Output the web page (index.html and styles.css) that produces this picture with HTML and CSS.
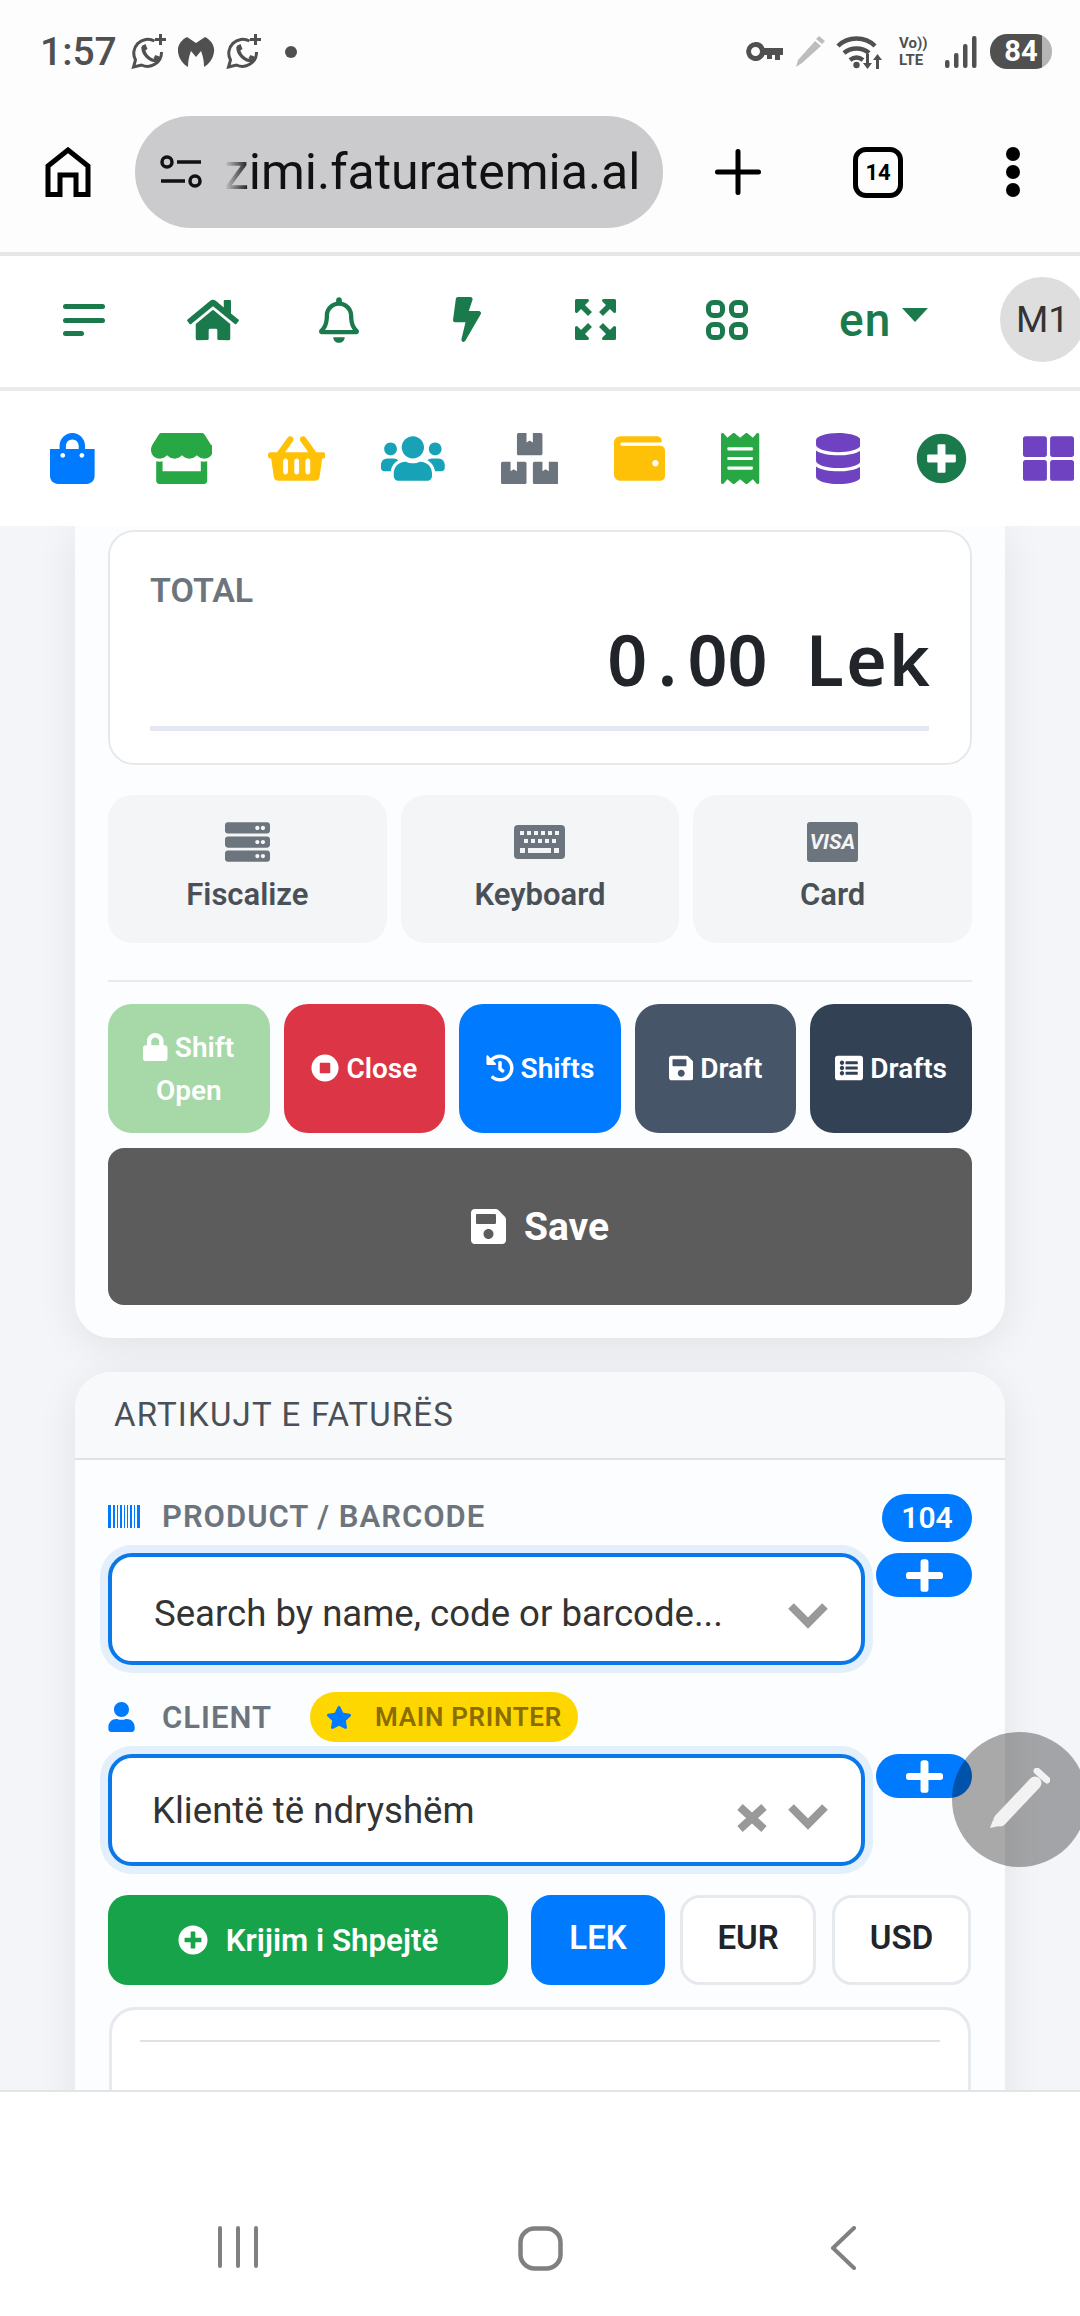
FILE: index.html
```html
<!DOCTYPE html>
<html lang="en">
<head>
    <meta charset="UTF-8">
    <meta name="viewport" content="width=device-width, initial-scale=1.0">
    <title>Faturatemia</title>
    <link rel="stylesheet" href="styles.css">
</head>

<body>
    <svg class="defs" width="0" height="0">
        <defs>
            <path id="i-save" d="M433.941 129.941l-83.882-83.882A48 48 0 0 0 316.118 32H48C21.49 32 0 53.49 0 80v352c0 26.51 21.49 48 48 48h352c26.51 0 48-21.49 48-48V163.882a48 48 0 0 0-14.059-33.941zM224 416c-35.346 0-64-28.654-64-64 0-35.346 28.654-64 64-64s64 28.654 64 64c0 35.346-28.654 64-64 64zm96-304.52V212c0 6.627-5.373 12-12 12H76c-6.627 0-12-5.373-12-12V108c0-6.627 5.373-12 12-12h228.52c3.183 0 6.235 1.264 8.485 3.515l3.48 3.48A11.996 11.996 0 0 1 320 111.48z"/>
            <path id="i-plus" d="M416 208H272V64c0-17.67-14.33-32-32-32h-32c-17.67 0-32 14.33-32 32v144H32c-17.67 0-32 14.33-32 32v32c0 17.67 14.33 32 32 32h144v144c0 17.67 14.33 32 32 32h32c17.67 0 32-14.33 32-32V304h144c17.67 0 32-14.33 32-32v-32c0-17.67-14.33-32-32-32z"/>
            <path id="i-plus-circle" d="M256 8C119 8 8 119 8 256s111 248 248 248 248-111 248-248S393 8 256 8zm144 276c0 6.6-5.4 12-12 12h-92v92c0 6.6-5.4 12-12 12h-56c-6.6 0-12-5.4-12-12v-92h-92c-6.6 0-12-5.4-12-12v-56c0-6.6 5.4-12 12-12h92v-92c0-6.6 5.4-12 12-12h56c6.6 0 12 5.4 12 12v92h92c6.6 0 12 5.4 12 12v56z"/>
            <g id="i-whatsapp">
                <path fill="none" stroke="currentColor" stroke-width="3" d="M23 7A14 14 0 0 0 4 26L2 33l8-2A14 14 0 0 0 30 18"/>
                <path fill="none" stroke="currentColor" stroke-width="3.500" d="M11.500 13c0 7 6 14 15 14"/>
                <path d="M10 12l4-2 2 5-3 2zM22 24l2-3 5 2-2 5z"/>
                <path d="M27.500 0h3v4h4v3h-4v4h-3V7h-4V4h4z"/>
            </g>
            <g id="i-corner">
                <path d="M1.500 1.500h11l-11 11z" stroke="#1a7a4c" stroke-width="3" stroke-linejoin="round"/>
                <path d="M4 4l11 11" fill="none" stroke="#1a7a4c" stroke-width="5.500"/>
            </g>
        </defs>
    </svg>

    <header class="status-bar">
        <span class="clock">1:57</span>
        <svg class="st-app" viewBox="0 0 35 35"><use href="#i-whatsapp"/></svg>
        <svg class="st-malware" viewBox="0 0 37 30"><path d="M9 0l9 6 9-6c6 3 10 9 9 15-1 7-5 12-10 15 0-6-1-11-3-16l-5 6-5-6c-2 5-3 10-3 16C5 27 1 22 0 15-1 9 3 3 9 0z"/></svg>
        <svg class="st-app" viewBox="0 0 35 35"><use href="#i-whatsapp"/></svg>
        <span class="st-dot"></span>
        <span class="spacer"></span>
        <svg class="st-key" viewBox="0 0 37 19"><path fill-rule="evenodd" d="M9.500 0a9.500 9.500 0 0 1 9 6H37v7h-3v5h-5v-5h-3v4h-5v-4h-2.500a9.500 9.500 0 1 1-9-13zm0 5a4.500 4.500 0 1 0 0 9 4.500 4.500 0 0 0 0-9z"/></svg>
        <svg class="st-pen" viewBox="0 0 31 31"><path d="M24 0l6 5-3 3-6-5zM20 5l6 5L7 27l-6 4 2-7z"/></svg>
        <svg class="st-wifi" viewBox="0 0 48 34"><path fill="none" stroke="currentColor" stroke-width="4.500" d="M2 11C12 1 29 1 39 11M8 18c7-6 18-6 25 0M14 25c4-3 9-3 13 0"/><circle cx="20.500" cy="30" r="3.200"/><path d="M30 19h3v9h3l-4.500 6-4.500-6h3zM43 34h-3v-9h-3l4.500-6 4.500 6h-3z"/></svg>
        <span class="st-volte">Vo))<br>LTE</span>
        <svg class="st-signal" viewBox="0 0 32 32"><rect x="0" y="24" width="4.500" height="8" rx="2"/><rect x="9" y="17" width="4.500" height="15" rx="2"/><rect x="18" y="8" width="4.500" height="24" rx="2"/><rect x="27" y="0" width="4.500" height="32" rx="2"/></svg>
        <span class="st-battery">84</span>
    </header>

    <div class="browser-bar">
        <svg class="br-home" viewBox="0 0 46 50"><path fill="none" stroke="#000" stroke-width="5" stroke-linejoin="miter" d="M3 47.500V19L23 3l20 16v28.500H31V28H15v19.500z"/></svg>
        <div class="url-pill">
            <svg class="br-tune" viewBox="0 0 42 34"><g fill="none" stroke="#111" stroke-width="3.500"><circle cx="7" cy="7" r="5"/><path d="M17 7h24M1 26h24"/><circle cx="35" cy="26" r="5"/></g></svg>
            <span class="url-text">zimi.faturatemia.al</span>
        </div>
        <svg class="br-plus" viewBox="0 0 46 46"><path fill="none" stroke="#000" stroke-width="5" stroke-linecap="round" d="M23 2.500v41M2.500 23h41"/></svg>
        <div class="br-tabs">14</div>
        <div class="br-menu"><span></span><span></span><span></span></div>
    </div>

    <nav class="top-nav">
        <a class="nav-cell"><svg width="42" height="32" viewBox="0 0 42 32"><rect width="42" height="5" y="0" rx="2.500"/><rect width="42" height="5" y="14" rx="2.500"/><rect width="21" height="5" y="27" rx="2.500"/></svg></a>
        <a class="nav-cell"><svg width="52" height="46" viewBox="0 0 576 512"><path d="M280.37 148.26L96 300.11V464a16 16 0 0 0 16 16l112.06-.29a16 16 0 0 0 15.92-16V368a16 16 0 0 1 16-16h64a16 16 0 0 1 16 16v95.64a16 16 0 0 0 16 16.05L464 480a16 16 0 0 0 16-16V300L295.67 148.26a12.19 12.19 0 0 0-15.3 0zM571.6 251.47L488 182.56V44.05a12 12 0 0 0-12-12h-56a12 12 0 0 0-12 12v72.61L318.47 43a48 48 0 0 0-61 0L4.34 251.47a12 12 0 0 0-1.6 16.9l25.5 31A12 12 0 0 0 45.15 301l235.22-193.74a12.19 12.19 0 0 1 15.3 0L530.9 301a12 12 0 0 0 16.9-1.6l25.5-31a12 12 0 0 0-1.7-16.93z"/></svg></a>
        <a class="nav-cell nudge"><svg width="40" height="46" viewBox="0 0 448 512"><path d="M439.39 362.29c-19.32-20.76-55.47-51.99-55.47-154.29 0-77.7-54.48-139.9-127.94-155.16V32c0-17.67-14.32-32-31.98-32s-31.98 14.33-31.98 32v20.84C118.56 68.1 64.08 130.3 64.08 208c0 102.3-36.15 133.53-55.47 154.29-6 6.45-8.66 14.16-8.61 21.71.11 16.4 12.98 32 32.1 32h383.8c19.12 0 32-15.6 32.1-32 .05-7.55-2.61-15.27-8.61-21.71zM67.53 368c21.22-27.97 44.42-74.33 44.53-159.42 0-.2-.06-.38-.06-.58 0-61.86 50.14-112 112-112s112 50.14 112 112c0 .2-.06.38-.06.58.11 85.1 23.31 131.46 44.53 159.42H67.53zM224 512c35.32 0 63.97-28.65 63.97-64H160.03c0 35.35 28.65 64 63.97 64z"/></svg></a>
        <a class="nav-cell nudge"><svg width="28" height="45" viewBox="0 0 320 512"><path d="M296 160H180.6l42.6-129.8C227.2 15 215.7 0 200 0H56C44 0 33.8 8.9 32.2 20.8l-32 240C-2.7 275.2 8.5 288 24 288h118.7L96.6 482.500c-3.6 15.2 8 29.5 23.3 29.5 8.4 0 16.4-4.4 20.8-12l176-304c9.300-15.9-2.2-36-20.7-36z"/></svg></a>
        <a class="nav-cell nudge"><svg width="41" height="41" viewBox="0 0 41 41"><use href="#i-corner"/><use href="#i-corner" transform="rotate(90 20.500 20.500)"/><use href="#i-corner" transform="rotate(180 20.500 20.500)"/><use href="#i-corner" transform="rotate(270 20.500 20.500)"/></svg></a>
        <a class="nav-cell"><svg width="42" height="40" viewBox="0 0 42 40" fill="none" stroke="#1a7a4c" stroke-width="5"><rect x="2.500" y="2.500" width="14" height="13" rx="5"/><rect x="25.500" y="2.500" width="14" height="13" rx="5"/><rect x="2.500" y="24.500" width="14" height="13" rx="5"/><rect x="25.500" y="24.500" width="14" height="13" rx="5"/></svg></a>
        <a class="lang">en<span class="caret"></span></a>
        <div class="avatar">M1</div>
    </nav>

    <div class="app-icons">
        <svg viewBox="0 0 448 512" fill="#007bff"><path d="M352 160v-32C352 57.42 294.579 0 224 0 153.42 0 96 57.42 96 128v32H0v272c0 44.183 35.817 80 80 80h288c44.183 0 80-35.817 80-80V160h-96zm-192-32c0-35.29 28.71-64 64-64s64 28.71 64 64v32H160v-32zm160 120c-13.255 0-24-10.745-24-24 0-13.255 10.745-24 24-24s24 10.745 24 24c0 13.255-10.745 24-24 24zm-192 0c-13.255 0-24-10.745-24-24 0-13.255 10.745-24 24-24s24 10.745 24 24c0 13.255-10.745 24-24 24z"/></svg>
        <svg viewBox="0 0 616 512" fill="#28a745"><path d="M602 118.6L537.1 15C531.3 5.7 521 0 510 0H106C95 0 84.7 5.7 78.9 15L14 118.6c-33.9 54.1-3.9 129.3 59.4 137.9 4.6.6 9.2.9 13.7.9 29.9 0 56.4-13.1 74.6-33.4 18.2 20.3 44.8 33.4 74.6 33.4 29.9 0 56.4-13.1 74.6-33.4 18.2 20.3 44.8 33.4 74.6 33.4 29.9 0 56.4-13.1 74.6-33.4 18.3 20.3 44.8 33.4 74.6 33.4 4.6 0 9.1-.3 13.7-.9 63.5-8.5 93.6-83.7 59.6-137.9zM529.5 288c-10 0-19.9-1.5-29.5-3.8V384H116v-99.8c-9.6 2.2-19.5 3.8-29.5 3.8-6 0-12.1-.4-18-1.2-5.6-.8-11.1-2.1-16.4-3.6V480c0 17.7 14.3 32 32 32h448c17.7 0 32-14.3 32-32V283.200c-5.4 1.6-10.8 2.9-16.4 3.6-6.1.8-12.1 1.2-18.2 1.2z"/></svg>
        <svg viewBox="0 0 576 512" fill="#ffc107"><path d="M576 216v16c0 13.255-10.745 24-24 24h-8l-26.113 182.788C514.509 462.435 494.257 480 470.37 480H105.63c-23.887 0-44.139-17.565-47.518-41.212L32 256h-8c-13.255 0-24-10.745-24-24v-16c0-13.255 10.745-24 24-24h67.341l106.78-146.821c10.395-14.292 30.407-17.453 44.701-7.058 14.293 10.395 17.453 30.408 7.058 44.701L170.477 192h235.046L326.12 82.821c-10.395-14.292-7.234-34.306 7.059-44.701 14.291-10.395 34.306-7.235 44.701 7.058L484.659 192H552c13.255 0 24 10.745 24 24zM312 392V280c0-13.255-10.745-24-24-24s-24 10.745-24 24v112c0 13.255 10.745 24 24 24s24-10.745 24-24zm112 0V280c0-13.255-10.745-24-24-24s-24 10.745-24 24v112c0 13.255 10.745 24 24 24s24-10.745 24-24zm-224 0V280c0-13.255-10.745-24-24-24s-24 10.745-24 24v112c0 13.255 10.745 24 24 24s24-10.745 24-24z"/></svg>
        <svg viewBox="0 0 640 512" fill="#17a2b8"><path d="M96 224c35.3 0 64-28.7 64-64s-28.7-64-64-64-64 28.7-64 64 28.7 64 64 64zm448 0c35.3 0 64-28.7 64-64s-28.7-64-64-64-64 28.7-64 64 28.7 64 64 64zm32 32h-64c-17.6 0-33.500 7.100-45.100 18.600 40.300 22.100 68.900 62 75.100 109.400h66c17.700 0 32-14.300 32-32v-32c0-35.300-28.700-64-64-64zm-256 0c61.900 0 112-50.100 112-112S381.900 32 320 32 208 82.100 208 144s50.100 112 112 112zm76.800 32h-8.300c-20.800 10-43.900 16-68.500 16s-47.600-6-68.500-16h-8.300C179.600 288 128 339.600 128 403.200V432c0 26.500 21.500 48 48 48h288c26.500 0 48-21.500 48-48v-28.800c0-63.600-51.600-115.200-115.200-115.200zm-223.700-13.400C161.500 263.100 145.600 256 128 256H64c-35.300 0-64 28.700-64 64v32c0 17.700 14.300 32 32 32h65.900c6.300-47.400 34.900-87.300 75.200-109.400z"/></svg>
        <svg viewBox="0 0 576 512" fill="#6c757d"><path d="M560 288h-80v96l-32-21.300-32 21.300v-96h-80c-8.800 0-16 7.200-16 16v192c0 8.800 7.200 16 16 16h224c8.800 0 16-7.200 16-16V304c0-8.800-7.200-16-16-16zm-384-64h224c8.800 0 16-7.200 16-16V16c0-8.800-7.200-16-16-16h-80v96l-32-21.300L256 96V0h-80c-8.800 0-16 7.200-16 16v192c0 8.800 7.200 16 16 16zm64 64h-80v96l-32-21.300L96 384v-96H16c-8.800 0-16 7.200-16 16v192c0 8.800 7.200 16 16 16h224c8.800 0 16-7.200 16-16V304c0-8.800-7.200-16-16-16z"/></svg>
        <svg viewBox="0 0 512 512" fill="#ffc107"><path d="M461.200 128H80c-8.840 0-16-7.160-16-16s7.160-16 16-16h384c8.840 0 16-7.160 16-16 0-26.510-21.490-48-48-48H64C28.650 32 0 60.650 0 96v320c0 35.350 28.650 64 64 64h397.200c28.020 0 50.800-21.530 50.800-48V176c0-26.470-22.780-48-50.800-48zM416 336c-17.670 0-32-14.330-32-32s14.330-32 32-32 32 14.330 32 32-14.330 32-32 32z"/></svg>
        <svg viewBox="0 0 384 512" fill="#28a745"><path d="M358.400 3.200L320 48 265.600 3.200a15.900 15.900 0 0 0-19.200 0L192 48 137.600 3.200a15.900 15.900 0 0 0-19.200 0L64 48 25.600 3.200C15-4.700 0 2.800 0 16v480c0 13.200 15 20.700 25.600 12.800L64 464l54.400 44.800a15.900 15.900 0 0 0 19.200 0L192 464l54.400 44.800a15.900 15.900 0 0 0 19.200 0L320 464l38.400 44.800c10.500 7.900 25.600.4 25.600-12.800V16c0-13.200-15-20.700-25.600-12.800zM320 360c0 4.400-3.600 8-8 8H72c-4.400 0-8-3.600-8-8v-16c0-4.400 3.600-8 8-8h240c4.400 0 8 3.600 8 8v16zm0-96c0 4.400-3.600 8-8 8H72c-4.400 0-8-3.600-8-8v-16c0-4.400 3.600-8 8-8h240c4.400 0 8 3.600 8 8v16zm0-96c0 4.400-3.600 8-8 8H72c-4.400 0-8-3.600-8-8v-16c0-4.400 3.600-8 8-8h240c4.400 0 8 3.600 8 8v16z"/></svg>
        <svg viewBox="0 0 448 512" fill="#6f42c1"><path d="M448 73.143v45.714C448 159.143 347.667 192 224 192S0 159.143 0 118.857V73.143C0 32.857 100.333 0 224 0s224 32.857 224 73.143zM448 176v102.857C448 319.143 347.667 352 224 352S0 319.143 0 278.857V176c48.125 33.143 136.208 48.572 224 48.572S399.874 209.143 448 176zm0 160v102.857C448 479.143 347.667 512 224 512S0 479.143 0 438.857V336c48.125 33.143 136.208 48.572 224 48.572S399.874 369.143 448 336z"/></svg>
        <svg viewBox="0 0 512 512" fill="#1a7a4c"><use href="#i-plus-circle"/></svg>
        <svg viewBox="0 0 512 512" fill="#6f42c1"><path d="M296 32h192c13.255 0 24 10.745 24 24v160c0 13.255-10.745 24-24 24H296c-13.255 0-24-10.745-24-24V56c0-13.255 10.745-24 24-24zm-80 0H24C10.745 32 0 42.745 0 56v160c0 13.255 10.745 24 24 24h192c13.255 0 24-10.745 24-24V56c0-13.255-10.745-24-24-24zM0 296v160c0 13.255 10.745 24 24 24h192c13.255 0 24-10.745 24-24V296c0-13.255-10.745-24-24-24H24c-13.255 0-24 10.745-24 24zm296 184h192c13.255 0 24-10.745 24-24V296c0-13.255-10.745-24-24-24H296c-13.255 0-24 10.745-24 24v160c0 13.255 10.745 24 24 24z"/></svg>
    </div>

    <main class="content">
        <section class="card card-total">
            <div class="total-box">
                <div class="total-label">TOTAL</div>
                <div class="total-value">0<span class="total-dot">.</span>00 <span class="total-unit">Lek</span></div>
                <div class="total-line"></div>
            </div>

            <div class="pay-grid">
                <button class="pay-btn">
                    <svg width="45" height="40" viewBox="0 0 512 448"><path transform="translate(0 -32)" d="M480 160H32c-17.673 0-32-14.327-32-32V64c0-17.673 14.327-32 32-32h448c17.673 0 32 14.327 32 32v64c0 17.673-14.327 32-32 32zm-48-88c-13.255 0-24 10.745-24 24s10.745 24 24 24 24-10.745 24-24-10.745-24-24-24zm-64 0c-13.255 0-24 10.745-24 24s10.745 24 24 24 24-10.745 24-24-10.745-24-24-24zm112 248H32c-17.673 0-32-14.327-32-32v-64c0-17.673 14.327-32 32-32h448c17.673 0 32 14.327 32 32v64c0 17.673-14.327 32-32 32zm-48-88c-13.255 0-24 10.745-24 24s10.745 24 24 24 24-10.745 24-24-10.745-24-24-24zm-64 0c-13.255 0-24 10.745-24 24s10.745 24 24 24 24-10.745 24-24-10.745-24-24-24zm112 248H32c-17.673 0-32-14.327-32-32v-64c0-17.673 14.327-32 32-32h448c17.673 0 32 14.327 32 32v64c0 17.673-14.327 32-32 32zm-48-88c-13.255 0-24 10.745-24 24s10.745 24 24 24 24-10.745 24-24-10.745-24-24-24zm-64 0c-13.255 0-24 10.745-24 24s10.745 24 24 24 24-10.745 24-24-10.745-24-24-24z"/></svg>
                    Fiscalize
                </button>
                <button class="pay-btn">
                    <svg width="51" height="40" viewBox="0 -3 51 40"><rect width="51" height="34" rx="4"/><g fill="#f3f5f6"><rect x="6" y="6" width="4" height="4"/><rect x="13" y="6" width="4" height="4"/><rect x="20" y="6" width="4" height="4"/><rect x="27" y="6" width="4" height="4"/><rect x="34" y="6" width="4" height="4"/><rect x="41" y="6" width="4" height="4"/><rect x="10" y="14" width="4" height="4"/><rect x="17" y="14" width="4" height="4"/><rect x="24" y="14" width="4" height="4"/><rect x="31" y="14" width="4" height="4"/><rect x="38" y="14" width="4" height="4"/><rect x="6" y="23" width="5" height="5"/><rect x="14" y="23" width="23" height="5"/><rect x="40" y="23" width="5" height="5"/></g></svg>
                    Keyboard
                </button>
                <button class="pay-btn">
                    <svg width="51" height="40" viewBox="0 0 51 40"><rect width="51" height="40" rx="3"/><text class="visa-text" x="25.500" y="27" text-anchor="middle">VISA</text></svg>
                    Card
                </button>
            </div>

            <div class="divider"></div>

            <div class="shift-row">
                <button class="shift-btn btn-open">
                    <span><svg class="ic" viewBox="0 0 448 512"><path d="M400 224h-24v-72C376 68.200 307.800 0 224 0S72 68.200 72 152v72H48c-26.500 0-48 21.500-48 48v192c0 26.500 21.500 48 48 48h352c26.500 0 48-21.500 48-48V272c0-26.500-21.500-48-48-48zm-104 0H152v-72c0-39.700 32.300-72 72-72s72 32.300 72 72v72z"/></svg> Shift Open</span>
                </button>
                <button class="shift-btn btn-close">
                    <span><svg class="ic" viewBox="0 0 512 512"><path d="M256 8C119 8 8 119 8 256s111 248 248 248 248-111 248-248S393 8 256 8zm96 328c0 8.800-7.200 16-16 16H176c-8.800 0-16-7.200-16-16V176c0-8.800 7.200-16 16-16h160c8.800 0 16 7.200 16 16v160z"/></svg> Close</span>
                </button>
                <button class="shift-btn btn-shifts">
                    <span><svg class="ic" viewBox="0 0 512 512"><path d="M504 255.531c.253 136.640-111.180 248.372-247.820 248.468-59.015.042-113.223-20.530-155.822-54.911-11.077-8.940-11.905-25.541-1.839-35.607l11.267-11.267c8.609-8.609 22.353-9.551 31.891-1.984C173.062 425.135 212.781 440 256 440c101.705 0 184-82.311 184-184 0-101.705-82.311-184-184-184-48.814 0-93.149 18.969-126.068 49.932l50.754 50.754c10.080 10.080 2.941 27.314-11.313 27.314H24c-8.837 0-16-7.163-16-16V38.627c0-14.254 17.234-21.393 27.314-11.314l49.372 49.372C129.209 34.136 189.552 8 256 8c136.810 0 247.747 110.780 248 247.531zm-180.912 78.784l9.823-12.630c8.138-10.463 6.253-25.542-4.210-33.679L288 256.349V152c0-13.255-10.745-24-24-24h-16c-13.255 0-24 10.745-24 24v135.651l65.409 50.874c10.463 8.137 25.541 6.253 33.679-4.210z"/></svg> Shifts</span>
                </button>
                <button class="shift-btn btn-draft">
                    <span><svg class="ic" viewBox="0 0 448 512"><use href="#i-save"/></svg> Draft</span>
                </button>
                <button class="shift-btn btn-drafts">
                    <span><svg class="ic" viewBox="0 0 512 512"><path d="M464 480H48c-26.510 0-48-21.490-48-48V80c0-26.510 21.490-48 48-48h416c26.510 0 48 21.490 48 48v352c0 26.510-21.490 48-48 48zM128 120c-22.091 0-40 17.909-40 40s17.909 40 40 40 40-17.909 40-40-17.909-40-40-40zm0 96c-22.091 0-40 17.909-40 40s17.909 40 40 40 40-17.909 40-40-17.909-40-40-40zm0 96c-22.091 0-40 17.909-40 40s17.909 40 40 40 40-17.909 40-40-17.909-40-40-40zm288-136v-32c0-6.627-5.373-12-12-12H204c-6.627 0-12 5.373-12 12v32c0 6.627 5.373 12 12 12h200c6.627 0 12-5.373 12-12zm0 96v-32c0-6.627-5.373-12-12-12H204c-6.627 0-12 5.373-12 12v32c0 6.627 5.373 12 12 12h200c6.627 0 12-5.373 12-12zm0 96v-32c0-6.627-5.373-12-12-12H204c-6.627 0-12 5.373-12 12v32c0 6.627 5.373 12 12 12h200c6.627 0 12-5.373 12-12z"/></svg> Drafts</span>
                </button>
            </div>

            <button class="save-btn">
                <svg width="35" height="35" viewBox="0 32 448 448"><use href="#i-save"/></svg>
                Save
            </button>
        </section>

        <section class="card card-items">
            <div class="card-header">ARTIKUJT E FATURËS</div>
            <div class="card-body">
                <div class="field field-product">
                    <label class="field-label">
                        <svg class="barcode" width="32" height="23" viewBox="0 0 32 23"><path d="M0 0h3v23H0zM5 0h2v23H5zM9 0h1v23H9zM12 0h2v23h-2zM16 0h1v23h-1zM19 0h1v23h-1zM22 0h2v23h-2zM26 0h1v23h-1zM29 0h3v23h-3z"/></svg>
                        PRODUCT / BARCODE
                    </label>
                    <span class="count-badge">104</span>
                    <div class="select-box">
                        <span class="select-text search-text">Search by name, code or barcode...</span>
                        <svg class="chevron" viewBox="0 0 40 28"><path fill="none" stroke="#999" stroke-width="8" d="M3 5l17 17L37 5"/></svg>
                    </div>
                    <button class="add-btn"><svg width="37" height="37" viewBox="0 0 448 512" preserveAspectRatio="none"><use href="#i-plus"/></svg></button>
                </div>

                <div class="field field-client">
                    <label class="field-label">
                        <svg class="user-ic" width="27" height="30" viewBox="0 0 448 512"><path d="M224 256c70.700 0 128-57.300 128-128S294.700 0 224 0 96 57.300 96 128s57.300 128 128 128zm89.600 32h-16.700c-22.200 10.200-46.900 16-72.900 16s-50.600-5.800-72.900-16h-16.700C60.200 288 0 348.200 0 422.400V464c0 26.500 21.500 48 48 48h352c26.500 0 48-21.500 48-48v-41.600c0-74.200-60.200-134.400-134.400-134.400z"/></svg>
                        CLIENT
                        <span class="printer-pill">
                            <svg width="26" height="23" viewBox="0 0 576 512"><path d="M259.300 17.800L194 150.200 47.900 171.500c-26.200 3.800-36.700 36.100-17.700 54.600l105.700 103-25 145.500c-4.500 26.300 23.200 46 46.400 33.700L288 439.600l130.700 68.700c23.200 12.200 50.900-7.400 46.400-33.700l-25-145.500 105.700-103c19-18.500 8.500-50.800-17.700-54.600L382 150.200 316.700 17.800c-11.700-23.600-45.600-23.900-57.400 0z"/></svg>
                            MAIN PRINTER
                        </span>
                    </label>
                    <span></span>
                    <div class="select-box">
                        <span class="select-text client-text">Klientë të ndryshëm</span>
                        <svg class="clear-x" viewBox="0 0 30 28"><path fill="none" stroke="#999" stroke-width="8" d="M3 3l24 22M27 3L3 25"/></svg>
                        <svg class="chevron" viewBox="0 0 40 28"><path fill="none" stroke="#999" stroke-width="8" d="M3 5l17 17L37 5"/></svg>
                    </div>
                    <button class="add-btn"><svg width="37" height="37" viewBox="0 0 448 512" preserveAspectRatio="none"><use href="#i-plus"/></svg></button>
                </div>

                <div class="quick-row">
                    <button class="quick-btn">
                        <svg width="30" height="30" viewBox="0 0 512 512"><use href="#i-plus-circle"/></svg>
                        Krijim i Shpejtë
                    </button>
                    <button class="cur-btn cur-lek">LEK</button>
                    <button class="cur-btn cur-eur">EUR</button>
                    <button class="cur-btn cur-usd">USD</button>
                </div>

                <div class="table-box">
                    <div class="table-line"></div>
                </div>
            </div>
        </section>
    </main>

    <footer class="nav-bar">
        <svg width="40" height="42" viewBox="0 0 40 42" fill="none" stroke="#808080" stroke-width="4" stroke-linecap="round"><path d="M2 2v38M20 2v38M38 2v38"/></svg>
        <svg width="45" height="45" viewBox="0 0 45 45" fill="none" stroke="#808080" stroke-width="4.500"><rect x="2.500" y="2.500" width="40" height="40" rx="14"/></svg>
        <svg width="26" height="44" viewBox="0 0 26 44" fill="none" stroke="#808080" stroke-width="4" stroke-linecap="round" stroke-linejoin="round"><path d="M24 2L3 22l21 20"/></svg>
    </footer>

    <button class="fab">
        <svg width="60" height="64" viewBox="0 0 60 64"><path d="M0 60l3-8 6 6z"/><path d="M10 52L45 15" fill="none" stroke="#f2f2f2" stroke-width="13" stroke-linecap="round"/><path d="M47 3l10 9" fill="none" stroke="#f2f2f2" stroke-width="7" stroke-linecap="round"/></svg>
    </button>
</body>
</html>
```
FILE: styles.css
```css
* {
    box-sizing: border-box;
}

html,
body {
    margin: 0;
    padding: 0;
}

body {
    position: relative;
    width: 1080px;
    height: 2316px;
    overflow: hidden;
    font-family: Roboto, "Noto Sans", sans-serif;
    background-color: #fff;
}

button {
    font-family: inherit;
    border: none;
    padding: 0;
    cursor: pointer;
}

.defs {
    position: absolute;
}

/* phone status bar */
.status-bar {
    height: 100px;
    display: flex;
    align-items: center;
    padding: 3px 28px 0 40px;
    background-color: #fdfdfe;
    color: #505050;
    fill: #505050;
}

.clock {
    width: 91px;
    font-size: 39px;
    font-weight: 500;
}

.st-app {
    width: 36px;
    height: 35px;
}

.st-malware {
    width: 37px;
    height: 30px;
    margin: 0 11px;
}

.st-dot {
    width: 12px;
    height: 12px;
    margin-left: 23px;
    border-radius: 50%;
    background-color: #505050;
}

.spacer {
    flex: 1;
}

.st-key {
    width: 37px;
    height: 19px;
    margin-right: 12px;
}

.st-pen {
    width: 31px;
    height: 31px;
    fill: #bdbdbd;
    margin-right: 10px;
}

.st-wifi {
    width: 48px;
    height: 34px;
    margin-right: 15px;
}

.st-volte {
    width: 31px;
    font-size: 15px;
    font-weight: 700;
    line-height: 17px;
    margin-right: 15px;
}

.st-signal {
    width: 32px;
    height: 32px;
    margin-right: 13px;
}

.st-battery {
    width: 62px;
    height: 35px;
    border-radius: 17px;
    background: linear-gradient(90deg, #505050 84%, #b5b5b5 84%);
    color: #fff;
    font-size: 29px;
    font-weight: 700;
    text-align: center;
    line-height: 35px;
}

/* browser toolbar */
.browser-bar {
    height: 156px;
    display: flex;
    align-items: center;
    padding: 0 0 8px 45px;
    background-color: #fdfdfe;
    border-bottom: 4px solid #e5e6e8;
}

.br-home {
    width: 46px;
    height: 50px;
    margin-right: 44px;
}

.url-pill {
    flex: none;
    width: 528px;
    height: 112px;
    border-radius: 56px;
    background-color: #cbcbcd;
    display: flex;
    align-items: center;
    padding-left: 25px;
}

.br-tune {
    width: 42px;
    height: 34px;
    margin-right: 22px;
}

.url-text {
    font-size: 50px;
    color: #111;
    -webkit-mask-image: linear-gradient(90deg, transparent 0, #000 26px);
    mask-image: linear-gradient(90deg, transparent 0, #000 26px);
}

.br-plus {
    flex: none;
    width: 46px;
    height: 46px;
    margin-left: 52px;
}

.br-tabs {
    flex: none;
    width: 50px;
    height: 51px;
    margin-left: 92px;
    border: 5px solid #000;
    border-radius: 13px;
    font-size: 22px;
    font-weight: 700;
    line-height: 41px;
    text-align: center;
    color: #000;
}

.br-menu {
    margin-left: 103px;
    display: flex;
    flex-direction: column;
    gap: 4px;
}

.br-menu span {
    width: 14px;
    height: 14px;
    border-radius: 50%;
    background-color: #000;
}

/* app navigation */
.top-nav {
    height: 135px;
    display: flex;
    align-items: center;
    padding: 0 0 4px 20px;
    background-color: #fff;
    border-bottom: 4px solid #e9eaeb;
    fill: #1a7a4c;
    color: #1a7a4c;
}

.nav-cell {
    flex: none;
    width: 128.5px;
    display: flex;
    justify-content: center;
    align-items: center;
}

.nudge svg {
    margin-right: 5px;
}

.lang {
    flex: none;
    width: 209px;
    padding-left: 48px;
    display: flex;
    align-items: center;
    font-size: 46px;
    font-weight: 500;
    letter-spacing: 1px;
}

.caret {
    width: 0;
    height: 0;
    margin: -10px 0 0 11px;
    border-left: 13px solid transparent;
    border-right: 13px solid transparent;
    border-top: 14px solid #1a7a4c;
}

.avatar {
    flex: none;
    width: 85px;
    height: 85px;
    border-radius: 50%;
    background-color: #dedede;
    color: #333;
    font-size: 37px;
    line-height: 85px;
    text-align: center;
}

.app-icons {
    height: 135px;
    display: flex;
    align-items: center;
    gap: 56px;
    padding-left: 50px;
    background-color: #fff;
    overflow: hidden;
}

.app-icons svg {
    flex: none;
    height: 51px;
}

/* page content */
.content {
    height: 1564px;
    overflow: hidden;
    display: flex;
    flex-direction: column;
    gap: 34px;
    padding: 0 75px;
    background-color: #f4f5f9;
}

.card {
    flex: none;
    width: 930px;
    background-color: #fcfdfe;
    box-shadow: 0 8px 40px rgba(0, 0, 0, 0.08);
}

.card-total {
    height: 812px;
    padding: 4px 33px 0;
    border-radius: 0 0 36px 36px;
}

.total-box {
    height: 235px;
    padding: 40px 41px 0 40px;
    background-color: #fff;
    border: 2px solid #e6e9ec;
    border-radius: 26px;
}

.total-label {
    font-size: 34px;
    font-weight: 600;
    line-height: 36px;
    color: #6c757d;
}

.total-value {
    margin: 6px -3px 0 0;
    font-family: "Noto Sans", sans-serif;
    font-size: 70px;
    font-weight: 600;
    line-height: 90px;
    text-align: right;
    word-spacing: 20px;
    color: #212529;
}

.total-dot {
    display: inline-block;
    width: 40px;
    text-align: center;
}

.total-unit {
    letter-spacing: 2px;
}

.total-line {
    height: 5px;
    margin-top: 22px;
    background-color: #e4e7f2;
}

.pay-grid {
    display: grid;
    grid-template-columns: repeat(3, 1fr);
    gap: 14px;
    margin-top: 30px;
}

.pay-btn {
    height: 148px;
    display: flex;
    flex-direction: column;
    align-items: center;
    gap: 18px;
    padding-top: 27px;
    border-radius: 24px;
    background-color: #f3f5f6;
    fill: #6c757d;
    color: #495057;
    font-size: 31px;
    font-weight: 600;
    line-height: 30px;
}

.visa-text {
    fill: #f3f5f6;
    font-size: 21px;
    font-weight: 700;
    font-style: italic;
}

.divider {
    height: 2px;
    margin-top: 37px;
    background-color: #e6ebef;
}

.shift-row {
    display: grid;
    grid-template-columns: repeat(5, 1fr);
    gap: 14px;
    margin-top: 22px;
}

.shift-btn {
    height: 129px;
    padding: 0 8px;
    border-radius: 24px;
    color: #fff;
    fill: #fff;
    font-size: 28px;
    font-weight: 600;
    line-height: 43px;
}

.ic {
    height: 28px;
    width: auto;
    vertical-align: -4px;
}

.btn-open {
    background-color: #a7d8a8;
}

.btn-close {
    background-color: #dc3545;
}

.btn-shifts {
    background-color: #007bff;
}

.btn-draft {
    background-color: #475569;
}

.btn-drafts {
    background-color: #334155;
}

.save-btn {
    width: 100%;
    height: 157px;
    margin-top: 15px;
    display: flex;
    align-items: center;
    justify-content: center;
    gap: 18px;
    border-radius: 16px;
    background-color: #5c5c5c;
    color: #fff;
    fill: #fff;
    font-size: 39px;
    font-weight: 700;
}

.card-items {
    border-radius: 36px 36px 0 0;
}

.card-header {
    height: 88px;
    padding: 23px 39px 0;
    border-bottom: 2px solid #dfe1e4;
    background-color: #f8f9fb;
    border-radius: 36px 36px 0 0;
    font-size: 33px;
    letter-spacing: 1.2px;
    line-height: 40px;
    color: #495057;
}

.card-body {
    padding: 34px 33px 0;
}

.field {
    display: grid;
    grid-template-columns: 757px 96px;
    column-gap: 11px;
    margin-bottom: 27px;
}

.field-label {
    display: flex;
    align-items: center;
    gap: 22px;
    font-size: 31px;
    font-weight: 600;
    letter-spacing: 1px;
    color: #6c757d;
    fill: #007bff;
}

.field-product .field-label {
    height: 59px;
    padding-bottom: 15px;
}

.field-client .field-label {
    height: 62px;
    padding-bottom: 12px;
    gap: 27px;
}

.barcode {
    flex: none;
}

.count-badge {
    justify-self: end;
    width: 90px;
    height: 48px;
    border-radius: 24px;
    background-color: #007bff;
    color: #fff;
    font-size: 30px;
    font-weight: 600;
    line-height: 48px;
    text-align: center;
}

.select-box {
    height: 112px;
    display: flex;
    align-items: center;
    padding: 0 33px 0 42px;
    background-color: #fff;
    border: 4px solid #0b78ea;
    border-radius: 24px;
    box-shadow: 0 0 0 8px #e3effb;
}

.select-text {
    flex: 1;
    font-size: 36.6px;
    color: #333;
}

.search-text {
    padding-top: 8px;
}

.client-text {
    margin-left: -2px;
}

.chevron {
    width: 40px;
    height: 28px;
    margin-top: 12px;
}

.clear-x {
    width: 30px;
    height: 28px;
    margin: 16px 21px 0 0;
}

.add-btn {
    height: 44px;
    display: flex;
    align-items: center;
    justify-content: center;
    border-radius: 22px;
    background-color: #007bff;
    fill: #fff;
}

.printer-pill {
    display: inline-flex;
    align-items: center;
    gap: 23px;
    height: 50px;
    margin-left: 11px;
    padding: 0 16px;
    border-radius: 25px;
    background-color: #ffd700;
    color: #8a6d00;
    font-size: 26px;
    font-weight: 600;
    letter-spacing: 0.7px;
}

.quick-row {
    display: flex;
    margin-top: 29px;
}

.quick-btn {
    width: 400px;
    height: 90px;
    display: flex;
    align-items: center;
    justify-content: center;
    gap: 18px;
    border-radius: 20px;
    background-color: #16a34a;
    color: #fff;
    fill: #fff;
    font-size: 31.3px;
    font-weight: 600;
}

.cur-btn {
    height: 90px;
    padding-bottom: 5px;
    border-radius: 20px;
    background-color: #fff;
    border: 3px solid #e6e9ee;
    color: #212529;
    font-size: 33px;
    font-weight: 600;
}

.cur-lek {
    width: 134px;
    margin-left: 23px;
    background-color: #007bff;
    border-color: #007bff;
    color: #fff;
}

.cur-eur {
    width: 136px;
    margin-left: 15px;
}

.cur-usd {
    width: 139px;
    margin-left: 16px;
}

.table-box {
    height: 200px;
    margin: 22px 1px 0;
    padding: 30px 28px 0;
    background-color: #fff;
    border: 3px solid #e6e9ee;
    border-radius: 26px;
}

.table-line {
    height: 2px;
    background-color: #dfe1e4;
}

/* android navigation bar */
.nav-bar {
    height: 226px;
    position: relative;
    display: flex;
    align-items: flex-start;
    padding-top: 134px;
    background-color: #fff;
    border-top: 2px solid #e3e4e6;
}

.nav-bar svg:nth-child(1) {
    margin-left: 218px;
}

.nav-bar svg:nth-child(2) {
    margin-left: 260px;
}

.nav-bar svg:nth-child(3) {
    margin-left: 267px;
}

.fab {
    position: absolute;
    left: 952px;
    top: 1732px;
    width: 135px;
    height: 135px;
    border-radius: 50%;
    background-color: rgba(0, 0, 0, 0.33);
    fill: #f2f2f2;
    display: flex;
    align-items: center;
    justify-content: center;
}
```
